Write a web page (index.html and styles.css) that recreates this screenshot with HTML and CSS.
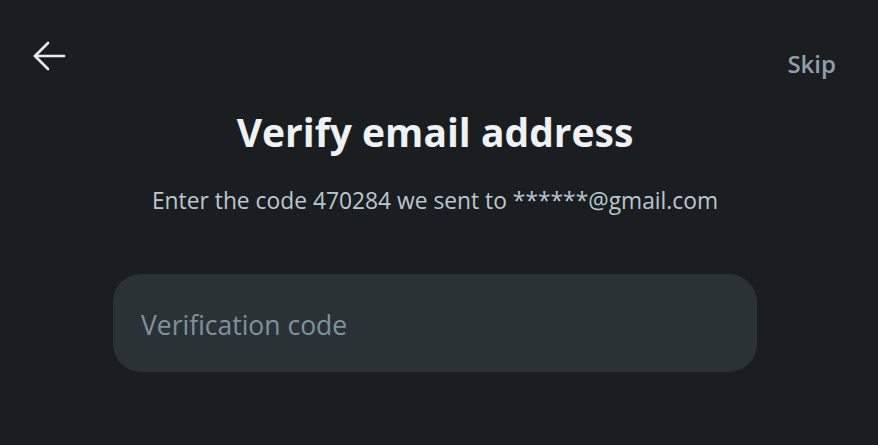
FILE: index.html
```html
<!DOCTYPE html>
<html lang="en">
  <head>
    <meta charset="UTF-8" />
    <meta name="viewport" content="width=device-width, initial-scale=1.0" />
    <title>Verify email address</title>
    <link rel="stylesheet" href="styles.css">
  </head>

  <body>
    <div class="top">
      <button class="back" aria-label="Back">
        <svg width="34" height="32" viewBox="0 0 34 32" fill="none" stroke="#e8edf0" stroke-width="2.6" stroke-linecap="round" stroke-linejoin="round">
          <path d="M32 15H3" />
          <path d="M16 2L3 15l13 13" />
        </svg>
      </button>
      <a class="skip" href="#">Skip</a>
    </div>

    <div class="main">
      <h1 class="title">Verify email address</h1>
      <p class="sub">Enter the code 470284 we sent to ******@gmail.com</p>
      <input class="code" type="text" placeholder="Verification code" />
    </div>
  </body>
</html>
```

FILE: styles.css
```css
html,
body {
  margin: 0;
  height: 100%;
}
body {
  background: #1b1e21;
  font-family: "Open Sans", "Noto Sans", sans-serif;
  color: #eef2f5;
}
.top {
  display: flex;
  justify-content: space-between;
  align-items: flex-start;
  padding: 41px 42px 0 32px;
}
.back {
  background: none;
  border: none;
  padding: 0;
  cursor: pointer;
  display: flex;
}
.skip {
  color: #8ea1aa;
  text-decoration: none;
  font-size: 24px;
  font-weight: 600;
  margin-top: 6px;
}
.main {
  display: flex;
  flex-direction: column;
  align-items: center;
  padding-right: 8px;
}
.title {
  font-size: 39px;
  font-weight: 700;
  margin: 25px 0 0;
  color: #eef2f5;
}
.sub {
  font-size: 22.8px;
  color: #b9c8d0;
  margin: 27px 0 0;
}
.code {
  margin-top: 58px;
  width: 644px;
  height: 98px;
  box-sizing: border-box;
  border: none;
  border-radius: 28px;
  background: #2b3236;
  padding: 4px 28px 0;
  font-family: inherit;
  font-size: 26.5px;
  color: #eef2f5;
  outline: none;
}
.code::placeholder {
  color: #7f929c;
}
```
